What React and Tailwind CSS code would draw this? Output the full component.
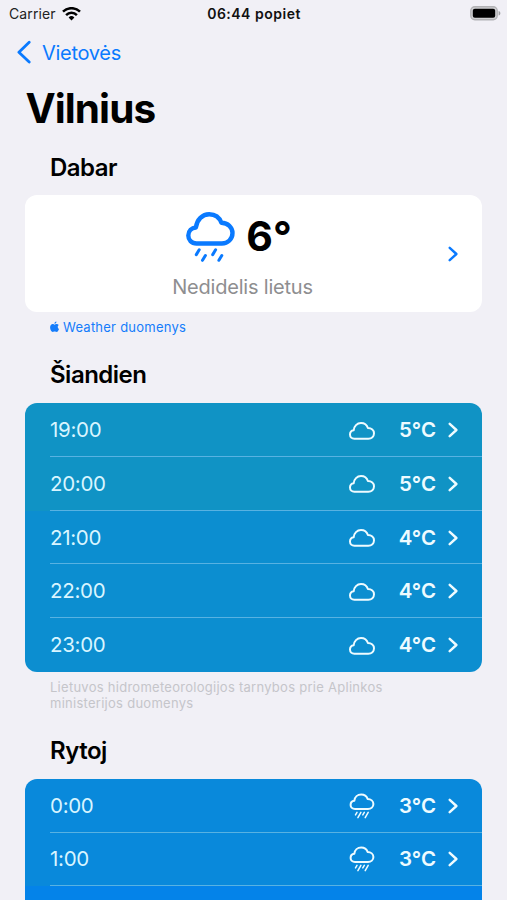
const today = [
    { time: '19:00', temp: '5°C', icon: 'cloud', color: 'bg-[#1093c5]' },
    { time: '20:00', temp: '5°C', icon: 'cloud', color: 'bg-[#1093c5]' },
    { time: '21:00', temp: '4°C', icon: 'cloud', color: 'bg-[#0c8ed0]' },
    { time: '22:00', temp: '4°C', icon: 'cloud', color: 'bg-[#0c8ed0]' },
    { time: '23:00', temp: '4°C', icon: 'cloud', color: 'bg-[#0c8ed0]' },
];

const tomorrow = [
    { time: '0:00', temp: '3°C', icon: 'rain', color: 'bg-[#0989db]' },
    { time: '1:00', temp: '3°C', icon: 'rain', color: 'bg-[#0989db]' },
];

export default function App() {
    return (
        <div className="h-[900px] w-[507px] overflow-hidden bg-[#f1f0f6] text-black font-['Inter',sans-serif]">
            <StatusBar />

            {/* Navigation */}
            <nav className="flex h-12 items-center pl-[17px] text-[#0a7aff]">
                <svg className="h-6 w-[15px]" viewBox="0 0 15 24" fill="none" stroke="currentColor" strokeWidth="2.8" strokeLinecap="round" strokeLinejoin="round">
                    <path d="M12.2 2.2 1.9 12.2l10.3 9.9" />
                </svg>
                <span className="ml-[10px] pt-px text-[20px] leading-6 tracking-[-0.3px]">Vietovės</span>
            </nav>

            <h1 className="mt-2 pl-[25.5px] text-[40.5px] leading-[50px] font-bold tracking-[-0.95px]">Vilnius</h1>

            <SectionTitle className="mt-[18.5px]">Dabar</SectionTitle>

            {/* Current weather */}
            <section className="mx-[25px] mt-[12.8px] flex h-[117px] items-center rounded-xl bg-white pr-[24px]">
                <div className="flex flex-1 flex-col items-center pl-[9px]">
                    <div className="flex h-[56px] -translate-x-[2.5px] items-center">
                        <svg className="h-[52px] w-[50px] text-[#0a7aff]" viewBox="0 0 50 52" fill="none" stroke="currentColor" strokeWidth="4.4" strokeLinecap="round" strokeLinejoin="round">
                            <path d="M11 32.5C6 32.5 2.8 28.9 2.8 24.5c0-4.6 3.4-7.6 7.6-8C11.4 8.6 16.9 3.2 23.7 3.2c6.3 0 10.3 3.4 12.2 8.6 6.5.1 11.1 4.4 11.1 10.2 0 5.9-4.6 10.5-10.6 10.5Z" />
                            <path strokeWidth="3" d="m13.7 38.8-2.9 4.800m9.100.900-2.900 4.800m13.100-10.500-2.900 4.800m9.100.900-2.900 4.800" />
                        </svg>
                        <span className="ml-[11px] pb-px text-[41px] leading-[50px] font-bold">6°</span>
                    </div>
                    <p className="mt-[9px] translate-x-[1.5px] pt-px text-[20px] leading-6 tracking-[-0.2px] text-[#8e8e90]">Nedidelis lietus</p>
                </div>
                <Chevron className="text-[#0a7aff]" />
            </section>

            <p className="mt-[7px] flex items-center pl-[50px] text-[13px] leading-4 tracking-[0.24px] text-[#147cfb]">
                <AppleLogo />
                <span className="ml-1">Weather duomenys</span>
            </p>

            <SectionTitle className="mt-[25.2px]">Šiandien</SectionTitle>
            <HourList hours={today} className="mt-[13px] rounded-xl" />
            <p className="mt-[7.5px] pl-[50px] text-[13px] leading-4 tracking-[0.27px] text-[#c5c5ca]">
                Lietuvos hidrometeorologijos tarnybos prie Aplinkos
                <br />
                ministerijos duomenys
            </p>

            <SectionTitle className="mt-[25px]">Rytoj</SectionTitle>
            <HourList hours={tomorrow} className="mt-[12.7px] rounded-t-xl" divideLast />
            <div className="mx-[25px] h-5 bg-[#0483e9]" />
        </div>
    );
}

function StatusBar() {
    return (
        <header className="grid h-7 grid-cols-3 items-center pr-[6px] pl-[9px] text-[14px] leading-5">
            <div className="flex items-center">
                <span className="tracking-[0.1px] text-[#222]">Carrier</span>
                <svg className="ml-[6px] h-[14px] w-[19px]" viewBox="0 0 19 14" fill="none" stroke="black" strokeWidth="2.5">
                    <path d="M1 4.700a12 12 0 0 1 17 0" />
                    <path d="M4.100 8.100a7.600 7.600 0 0 1 10.800 0" />
                    <path d="M9.500 13.400 6.600 10.400a4.100 4.100 0 0 1 5.800 0Z" fill="black" stroke="none" />
                </svg>
            </div>
            <span className="-ml-[2px] text-center font-semibold tracking-[0.5px] whitespace-nowrap text-[#111]">06:44 popiet</span>
            <svg className="-mt-px h-[15px] w-[31px] justify-self-end" viewBox="0 0 31 15">
                <rect x="0.8" y="0.8" width="26.4" height="13" rx="4" fill="#d0d0d3" stroke="#b2b2b5" strokeWidth="1.4" />
                <rect x="2.8" y="2.8" width="22.4" height="9" rx="2" fill="black" />
                <path d="M28.6 5v4.600c2.400-.7 2.400-3.900 0-4.600Z" fill="#a0a0a3" />
            </svg>
        </header>
    );
}

function SectionTitle({ children, className }) {
    return <h2 className={`pl-[50px] text-[24px] leading-[30px] font-semibold tracking-[-0.5px] ${className}`}>{children}</h2>;
}

function HourList({ hours, className, divideLast = false }) {
    return (
        <ul className={`mx-[25px] overflow-hidden ${className}`}>
            {hours.map((hour, i) => (
                <li key={hour.time} className={`h-[53.65px] pl-[25px] text-[#eefbff] ${hour.color}`}>
                    <div className={`flex h-full items-center pt-px pr-[24px] ${divideLast || i < hours.length - 1 ? 'border-b border-[#58b2e2]' : ''}`}>
                        <span className="flex-1 pt-px text-[20.5px] tracking-[-0.3px] text-[#d9f5ff]">{hour.time}</span>
                        {hour.icon === 'rain' ? <RainIcon /> : <CloudIcon />}
                        <span className="w-[61px] pt-px text-right text-[20.5px] font-semibold">{hour.temp}</span>
                        <Chevron className="ml-3" />
                    </div>
                </li>
            ))}
        </ul>
    );
}

function CloudIcon() {
    return (
        <svg className="mt-px h-[18px] w-[26px]" viewBox="0 0 26 18" fill="none" stroke="currentColor" strokeWidth="2" strokeLinejoin="round">
            <path d="M5.400 16.700C2.800 16.700 1 14.900 1 12.500c0-2.300 1.700-4 3.700-4.300C5 4.200 8.100 1 12 1c3.400 0 5.900 1.900 6.900 5 3.600.1 6.100 2.300 6.100 5.300 0 3.100-2.400 5.400-5.700 5.400Z" />
        </svg>
    );
}

function RainIcon() {
    return (
        <svg className="h-[26px] w-[26px]" viewBox="0 0 26 26" fill="none" stroke="currentColor" strokeWidth="2" strokeLinecap="round" strokeLinejoin="round">
            <path d="M6 15.900C3.400 15.900 1.600 14.100 1.600 11.900c0-2.200 1.600-3.800 3.700-4.100C5.700 4.200 8.600 1.500 12.200 1.500c3.100 0 5.400 1.600 6.400 4.400 3.300.1 5.800 2.200 5.800 5 0 2.900-2.300 5-5.400 5Z" />
            <path strokeWidth="1.5" d="m8 19.300-1.500 2.600m5.400-2.600-3 5.400m6.400-5.400-1.500 2.600m5.400-2.600-3 5.400" />
        </svg>
    );
}

function Chevron({ className }) {
    return (
        <svg className={`h-4 w-[10px] ${className}`} viewBox="0 0 10 16" fill="none" stroke="currentColor" strokeWidth="2.4" strokeLinecap="round" strokeLinejoin="round">
            <path d="M1.700 1.800 8.400 8l-6.700 6.200" />
        </svg>
    );
}

function AppleLogo() {
    return (
        <svg className="h-[12px] w-[9px]" viewBox="0 0 9 12" fill="currentColor">
            <path d="M4.500 3.700c.6 0 1.200-.6 2.200-.6.8 0 1.600.4 2 1-1.500 1-1.200 3.300.3 4-.5 1.500-1.300 2.900-2.300 2.900-.8 0-1-.4-2-.4s-1.300.4-2 .4C1.300 11 .1 8.800.1 6.600c0-2.200 1.300-3.500 2.600-3.500.8 0 1.400.6 1.800.6Z" />
            <path d="M6.400.5c.1 1.300-.8 2.300-2 2.300C4.300 1.700 5.200.6 6.400.5Z" />
        </svg>
    );
}
